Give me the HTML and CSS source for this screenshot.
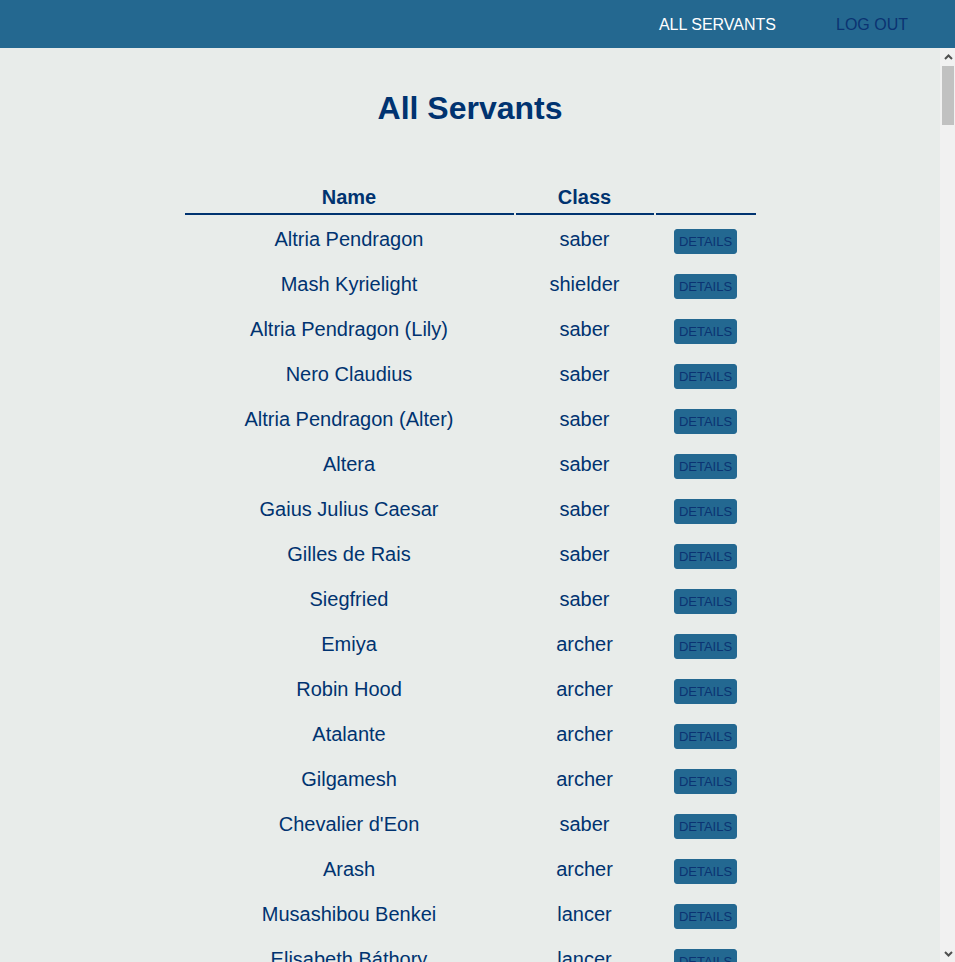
FILE: index.html
```html
<!DOCTYPE html>
<html lang="en">
<head>
<meta charset="utf-8">
<title>All Servants</title>
<link rel="stylesheet" href="styles.css">
</head>
<body>
<div class="app">
  <header class="topbar">
    <nav class="nav">
      <a class="nav-link nav-link-active" href="#">ALL SERVANTS</a>
      <a class="nav-link" href="#">LOG OUT</a>
    </nav>
  </header>
  <div class="viewport">
  <main class="content">
    <h1 class="title">All Servants</h1>
    <table class="servants">
      <thead>
        <tr>
          <th class="col-name">Name</th>
          <th class="col-class">Class</th>
          <th class="col-action"></th>
        </tr>
      </thead>
      <tbody>
        <tr><td>Altria Pendragon</td><td>saber</td><td><button class="btn">DETAILS</button></td></tr>
        <tr><td>Mash Kyrielight</td><td>shielder</td><td><button class="btn">DETAILS</button></td></tr>
        <tr><td>Altria Pendragon (Lily)</td><td>saber</td><td><button class="btn">DETAILS</button></td></tr>
        <tr><td>Nero Claudius</td><td>saber</td><td><button class="btn">DETAILS</button></td></tr>
        <tr><td>Altria Pendragon (Alter)</td><td>saber</td><td><button class="btn">DETAILS</button></td></tr>
        <tr><td>Altera</td><td>saber</td><td><button class="btn">DETAILS</button></td></tr>
        <tr><td>Gaius Julius Caesar</td><td>saber</td><td><button class="btn">DETAILS</button></td></tr>
        <tr><td>Gilles de Rais</td><td>saber</td><td><button class="btn">DETAILS</button></td></tr>
        <tr><td>Siegfried</td><td>saber</td><td><button class="btn">DETAILS</button></td></tr>
        <tr><td>Emiya</td><td>archer</td><td><button class="btn">DETAILS</button></td></tr>
        <tr><td>Robin Hood</td><td>archer</td><td><button class="btn">DETAILS</button></td></tr>
        <tr><td>Atalante</td><td>archer</td><td><button class="btn">DETAILS</button></td></tr>
        <tr><td>Gilgamesh</td><td>archer</td><td><button class="btn">DETAILS</button></td></tr>
        <tr><td>Chevalier d'Eon</td><td>saber</td><td><button class="btn">DETAILS</button></td></tr>
        <tr><td>Arash</td><td>archer</td><td><button class="btn">DETAILS</button></td></tr>
        <tr><td>Musashibou Benkei</td><td>lancer</td><td><button class="btn">DETAILS</button></td></tr>
        <tr><td>Elisabeth Báthory</td><td>lancer</td><td><button class="btn">DETAILS</button></td></tr>
        <tr><td>Cu Chulainn</td><td>lancer</td><td><button class="btn">DETAILS</button></td></tr>
        <tr><td>Cu Chulainn (Prototype)</td><td>lancer</td><td><button class="btn">DETAILS</button></td></tr>
        <tr><td>Leonidas</td><td>lancer</td><td><button class="btn">DETAILS</button></td></tr>
        <tr><td>Romulus</td><td>lancer</td><td><button class="btn">DETAILS</button></td></tr>
        <tr><td>Euryale</td><td>archer</td><td><button class="btn">DETAILS</button></td></tr>
        <tr><td>Medusa</td><td>rider</td><td><button class="btn">DETAILS</button></td></tr>
        <tr><td>Saint Georgios</td><td>rider</td><td><button class="btn">DETAILS</button></td></tr>
        <tr><td>Edward Teach</td><td>rider</td><td><button class="btn">DETAILS</button></td></tr>
        <tr><td>Boudica</td><td>rider</td><td><button class="btn">DETAILS</button></td></tr>
        <tr><td>Ushiwakamaru</td><td>rider</td><td><button class="btn">DETAILS</button></td></tr>
        <tr><td>Alexander</td><td>rider</td><td><button class="btn">DETAILS</button></td></tr>
        <tr><td>Marie Antoinette</td><td>rider</td><td><button class="btn">DETAILS</button></td></tr>
        <tr><td>Martha</td><td>rider</td><td><button class="btn">DETAILS</button></td></tr>
        <tr><td>Medea</td><td>caster</td><td><button class="btn">DETAILS</button></td></tr>
        <tr><td>Gilles de Rais</td><td>caster</td><td><button class="btn">DETAILS</button></td></tr>
        <tr><td>Hans Christian Andersen</td><td>caster</td><td><button class="btn">DETAILS</button></td></tr>
        <tr><td>William Shakespeare</td><td>caster</td><td><button class="btn">DETAILS</button></td></tr>
        <tr><td>Mephistopheles</td><td>caster</td><td><button class="btn">DETAILS</button></td></tr>
        <tr><td>Wolfgang Amadeus Mozart</td><td>caster</td><td><button class="btn">DETAILS</button></td></tr>
        <tr><td>Zhuge Liang</td><td>caster</td><td><button class="btn">DETAILS</button></td></tr>
        <tr><td>Cu Chulainn (Caster)</td><td>caster</td><td><button class="btn">DETAILS</button></td></tr>
        <tr><td>Sasaki Kojirou</td><td>assassin</td><td><button class="btn">DETAILS</button></td></tr>
        <tr><td>Hassan of the Cursed Arm</td><td>assassin</td><td><button class="btn">DETAILS</button></td></tr>
        <tr><td>Stheno</td><td>assassin</td><td><button class="btn">DETAILS</button></td></tr>
        <tr><td>Jing Ke</td><td>assassin</td><td><button class="btn">DETAILS</button></td></tr>
        <tr><td>Lu Bu Fengxian</td><td>berserker</td><td><button class="btn">DETAILS</button></td></tr>
        <tr><td>Heracles</td><td>berserker</td><td><button class="btn">DETAILS</button></td></tr>
        <tr><td>Lancelot</td><td>berserker</td><td><button class="btn">DETAILS</button></td></tr>
        <tr><td>Spartacus</td><td>berserker</td><td><button class="btn">DETAILS</button></td></tr>
        <tr><td>Sakata Kintoki</td><td>berserker</td><td><button class="btn">DETAILS</button></td></tr>
        <tr><td>Vlad III</td><td>berserker</td><td><button class="btn">DETAILS</button></td></tr>
        <tr><td>Asterios</td><td>berserker</td><td><button class="btn">DETAILS</button></td></tr>
        <tr><td>Caligula</td><td>berserker</td><td><button class="btn">DETAILS</button></td></tr>
        <tr><td>Darius III</td><td>berserker</td><td><button class="btn">DETAILS</button></td></tr>
        <tr><td>Kiyohime</td><td>berserker</td><td><button class="btn">DETAILS</button></td></tr>
        <tr><td>Eric Bloodaxe</td><td>berserker</td><td><button class="btn">DETAILS</button></td></tr>
        <tr><td>Tamamo Cat</td><td>berserker</td><td><button class="btn">DETAILS</button></td></tr>
        <tr><td>Jeanne d'Arc</td><td>ruler</td><td><button class="btn">DETAILS</button></td></tr>
        <tr><td>Orion</td><td>archer</td><td><button class="btn">DETAILS</button></td></tr>
        <tr><td>Elisabeth Báthory (Halloween)</td><td>caster</td><td><button class="btn">DETAILS</button></td></tr>
        <tr><td>Tamamo no Mae</td><td>caster</td><td><button class="btn">DETAILS</button></td></tr>
        <tr><td>David</td><td>archer</td><td><button class="btn">DETAILS</button></td></tr>
        <tr><td>Hektor</td><td>lancer</td><td><button class="btn">DETAILS</button></td></tr>
        <tr><td>Francis Drake</td><td>rider</td><td><button class="btn">DETAILS</button></td></tr>
        <tr><td>Anne Bonny &amp; Mary Read</td><td>rider</td><td><button class="btn">DETAILS</button></td></tr>
        <tr><td>Medea (Lily)</td><td>caster</td><td><button class="btn">DETAILS</button></td></tr>
        <tr><td>Okita Souji</td><td>saber</td><td><button class="btn">DETAILS</button></td></tr>
        <tr><td>Oda Nobunaga</td><td>archer</td><td><button class="btn">DETAILS</button></td></tr>
        <tr><td>Henry Jekyll &amp; Hyde</td><td>assassin</td><td><button class="btn">DETAILS</button></td></tr>
        <tr><td>Mordred</td><td>saber</td><td><button class="btn">DETAILS</button></td></tr>
        <tr><td>Nikola Tesla</td><td>archer</td><td><button class="btn">DETAILS</button></td></tr>
        <tr><td>Altria Pendragon (Lancer Alter)</td><td>lancer</td><td><button class="btn">DETAILS</button></td></tr>
        <tr><td>Paracelsus</td><td>caster</td><td><button class="btn">DETAILS</button></td></tr>
        <tr><td>Charles Babbage</td><td>caster</td><td><button class="btn">DETAILS</button></td></tr>
        <tr><td>Jack the Ripper</td><td>assassin</td><td><button class="btn">DETAILS</button></td></tr>
        <tr><td>Frankenstein</td><td>berserker</td><td><button class="btn">DETAILS</button></td></tr>
        <tr><td>Nursery Rhyme</td><td>caster</td><td><button class="btn">DETAILS</button></td></tr>
        <tr><td>Mata Hari</td><td>assassin</td><td><button class="btn">DETAILS</button></td></tr>
        <tr><td>Carmilla</td><td>assassin</td><td><button class="btn">DETAILS</button></td></tr>
        <tr><td>Fergus mac Roich</td><td>saber</td><td><button class="btn">DETAILS</button></td></tr>
        <tr><td>Rama</td><td>saber</td><td><button class="btn">DETAILS</button></td></tr>
        <tr><td>Li Shuwen</td><td>lancer</td><td><button class="btn">DETAILS</button></td></tr>
        <tr><td>Thomas Edison</td><td>caster</td><td><button class="btn">DETAILS</button></td></tr>
        <tr><td>Geronimo</td><td>caster</td><td><button class="btn">DETAILS</button></td></tr>
        <tr><td>Billy the Kid</td><td>archer</td><td><button class="btn">DETAILS</button></td></tr>
        <tr><td>Jeanne d'Arc (Alter)</td><td>avenger</td><td><button class="btn">DETAILS</button></td></tr>
        <tr><td>Angra Mainyu</td><td>avenger</td><td><button class="btn">DETAILS</button></td></tr>
        <tr><td>Iskandar</td><td>rider</td><td><button class="btn">DETAILS</button></td></tr>
        <tr><td>Emiya (Assassin)</td><td>assassin</td><td><button class="btn">DETAILS</button></td></tr>
        <tr><td>Irisviel</td><td>caster</td><td><button class="btn">DETAILS</button></td></tr>
        <tr><td>Diarmuid Ua Duibhne</td><td>lancer</td><td><button class="btn">DETAILS</button></td></tr>
        <tr><td>Karna</td><td>lancer</td><td><button class="btn">DETAILS</button></td></tr>
        <tr><td>Arjuna</td><td>archer</td><td><button class="btn">DETAILS</button></td></tr>
        <tr><td>Cu Chulainn (Alter)</td><td>berserker</td><td><button class="btn">DETAILS</button></td></tr>
        <tr><td>Scáthach</td><td>lancer</td><td><button class="btn">DETAILS</button></td></tr>
        <tr><td>Queen Medb</td><td>rider</td><td><button class="btn">DETAILS</button></td></tr>
        <tr><td>Florence Nightingale</td><td>berserker</td><td><button class="btn">DETAILS</button></td></tr>
        <tr><td>Fionn mac Cumhaill</td><td>lancer</td><td><button class="btn">DETAILS</button></td></tr>
        <tr><td>Brynhild</td><td>lancer</td><td><button class="btn">DETAILS</button></td></tr>
        <tr><td>Beowulf</td><td>berserker</td><td><button class="btn">DETAILS</button></td></tr>
        <tr><td>Ishtar</td><td>archer</td><td><button class="btn">DETAILS</button></td></tr>
        <tr><td>Quetzalcoatl</td><td>rider</td><td><button class="btn">DETAILS</button></td></tr>
        <tr><td>Merlin</td><td>caster</td><td><button class="btn">DETAILS</button></td></tr>
      </tbody>
    </table>
  </main>
  <div class="scrollbar" aria-hidden="true">
    <div class="scroll-btn">
      <svg width="9" height="6" viewBox="0 0 9 6"><polyline points="1,5 4.5,1.5 8,5" fill="none" stroke="#505050" stroke-width="2"/></svg>
    </div>
    <div class="scroll-track">
      <div class="scroll-thumb"></div>
    </div>
    <div class="scroll-btn">
      <svg width="9" height="6" viewBox="0 0 9 6"><polyline points="1,1 4.5,4.5 8,1" fill="none" stroke="#505050" stroke-width="2"/></svg>
    </div>
  </div>
  </div>
</div>
</body>
</html>
```
FILE: styles.css
```css
* {
  box-sizing: border-box;
}

html, body {
  margin: 0;
  height: 100%;
  overflow: hidden;
}

body {
  font-family: "Liberation Sans", Arial, sans-serif;
  background: #e8ecea;
  color: #003370;
}

.app {
  display: flex;
  flex-direction: column;
  height: 100vh;
}

.topbar {
  flex: 0 0 48px;
  height: 48px;
  background: #246890;
  display: flex;
  align-items: center;
  justify-content: flex-end;
  padding: 2px 47px 0 0;
}

.nav {
  display: flex;
  align-items: center;
  gap: 60px;
}

.nav-link {
  font-size: 16px;
  text-decoration: none;
  color: #0b3372;
}

.nav-link-active {
  color: #ffffff;
}

.viewport {
  flex: 1 1 auto;
  min-height: 0;
  display: flex;
}

.content {
  flex: 1 1 auto;
  min-width: 0;
  overflow-y: auto;
  scrollbar-width: none;
  padding: 42px 0 40px;
}

.content::-webkit-scrollbar {
  display: none;
}

.scrollbar {
  flex: 0 0 15px;
  width: 15px;
  display: flex;
  flex-direction: column;
  background: #f1f1f1;
}

.scroll-btn {
  flex: 0 0 17px;
  height: 17px;
  display: flex;
  align-items: center;
  justify-content: center;
  padding-left: 2px;
}

.scroll-track {
  flex: 1 1 auto;
  padding: 1px 1px 0 2px;
}

.scroll-thumb {
  height: 59px;
  background: #c1c1c1;
}

.title {
  margin: 0 0 53px;
  font-size: 32px;
  font-weight: bold;
  text-align: center;
  color: #003370;
}

.servants {
  margin: 0 auto;
  border-collapse: separate;
  border-spacing: 2px;
  table-layout: fixed;
  width: 575px;
}

.servants th {
  font-size: 20px;
  font-weight: bold;
  padding: 4px 0;
  border-bottom: 2px solid #003370;
  text-align: center;
}

.col-name {
  width: 329px;
}

.col-class {
  width: 138px;
}

.col-action {
  width: 100px;
}

.servants td {
  font-size: 20px;
  height: 43px;
  padding: 11px 0 0;
  text-align: center;
  vertical-align: baseline;
}

.btn {
  font-family: "Liberation Sans", Arial, sans-serif;
  font-size: 13px;
  line-height: normal;
  padding: 4px;
  border: 1px solid #236891;
  border-radius: 3px;
  background: #236891;
  color: #0b3372;
  cursor: pointer;
}
```
